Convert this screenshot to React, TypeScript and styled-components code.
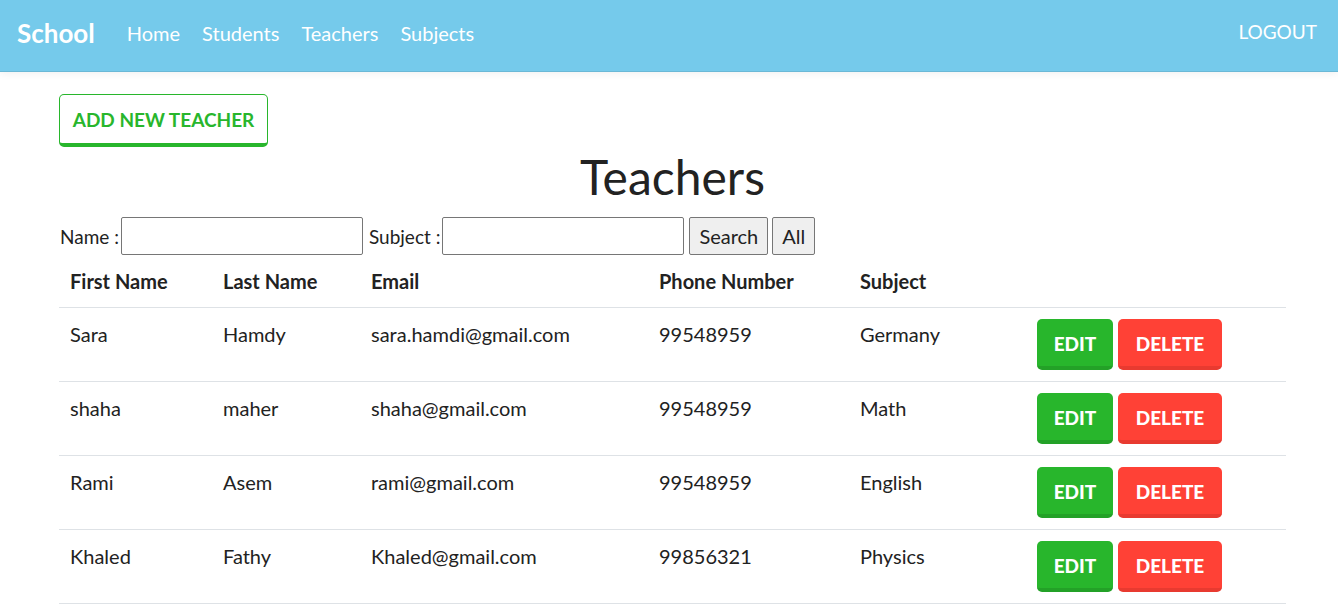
import React from "react";
import styled, { createGlobalStyle } from "styled-components";

const Global = createGlobalStyle`
  html, body { margin: 0; padding: 0; background: #fff; }
  body { font-family: Lato, "Noto Sans", sans-serif; color: #222; font-size: 20px; }
  * { box-sizing: border-box; }
`;

const Nav = styled.nav`
  height: 72px;
  background: #75caeb;
  border-bottom: 1px solid #6ab8d6;
  display: flex;
  align-items: center;
  padding: 0 21px 0 17px;
  box-shadow: 0 2px 8px rgba(0,0,0,0.06);
`;
const Brand = styled.a`
  font-weight: 700;
  font-size: 26px;
  color: #fff;
  margin-right: 32px;
  margin-top: -6px;
`;
const NavLinks = styled.div`
  display: flex;
  gap: 22px;
  flex: 1;
`;
const NavLink = styled.a`
  color: #fff;
  font-size: 20px;
  margin-top: -6px;
`;
const Logout = styled.a`
  color: #fff;
  font-size: 19px;
  margin-top: -9px;
`;

const Main = styled.main`
  padding: 22px 52px 0 59px;
`;

const AddButton = styled.button`
  font-family: inherit;
  height: 53px;
  width: 209px;
  background: #fff;
  border: 1px solid #28b62c;
  border-bottom: 4px solid #28b62c;
  border-radius: 5px;
  color: #28b62c;
  font-weight: 700;
  font-size: 19px;
  text-transform: uppercase;
  padding: 0;
  display: block;
`;

const Title = styled.h1`
  margin: 2px 0 12px;
  text-align: center;
  font-weight: 400;
  font-size: 48px;
  line-height: 56px;
  color: #222;
`;

const Filter = styled.form`
  display: flex;
  align-items: center;
  height: 38px;
  gap: 4px;
`;
const Label = styled.label`
  font-size: 19px;
  margin-left: 1px;
  display: flex;
  align-items: center;
  gap: 2px;
`;
const Input = styled.input`
  width: 242px;
  height: 38px;
  border: 1px solid #767676;
  border-radius: 2px;
  margin-right: 1px;
`;
const PlainButton = styled.button`
  font-family: inherit;
  font-size: 20px;
  height: 38px;
  padding: 0 9px;
  background: #efefef;
  border: 1px solid #767676;
  border-radius: 2px;
  color: #222;
`;

const Table = styled.table`
  width: 1227px;
  border-collapse: collapse;
  margin-top: 0;
`;
const Th = styled.th<{ $w?: number }>`
  text-align: left;
  font-weight: 700;
  font-size: 20px;
  padding: 11px 11px;
  line-height: 30px;
  border-bottom: 1px solid #dee2e6;
  width: ${(p) => (p.$w ? `${p.$w}px` : "auto")};
`;
const Td = styled.td`
  font-size: 20px;
  padding: 11px 11px 11px;
  line-height: 30px;
  vertical-align: top;
  border-bottom: 1px solid #dee2e6;
  height: 74px;
`;
const Actions = styled.div`
  display: flex;
  gap: 5px;
`;
const ActionButton = styled.button<{ $kind: "edit" | "delete" }>`
  font-family: inherit;
  height: 51px;
  width: ${(p) => (p.$kind === "edit" ? 76 : 104)}px;
  border: none;
  border-radius: 5px;
  border-bottom: 4px solid ${(p) => (p.$kind === "edit" ? "#23a127" : "#e83a30")};
  background: ${(p) => (p.$kind === "edit" ? "#28b62c" : "#ff4136")};
  color: #fff;
  font-weight: 900;
  font-size: 19px;
  text-transform: uppercase;
  padding: 2px 0 0;
`;

const teachers = [
  { f: "Sara", l: "Hamdy", e: "sara.hamdi@gmail.com", p: "99548959", s: "Germany" },
  { f: "shaha", l: "maher", e: "shaha@gmail.com", p: "99548959", s: "Math" },
  { f: "Rami", l: "Asem", e: "rami@gmail.com", p: "99548959", s: "English" },
  { f: "Khaled", l: "Fathy", e: "Khaled@gmail.com", p: "99856321", s: "Physics" },
];

export default function App() {
  return (
    <>
      <Global />
      <Nav>
        <Brand>School</Brand>
        <NavLinks>
          <NavLink>Home</NavLink>
          <NavLink>Students</NavLink>
          <NavLink>Teachers</NavLink>
          <NavLink>Subjects</NavLink>
        </NavLinks>
        <Logout>LOGOUT</Logout>
      </Nav>
      <Main>
        <AddButton>Add New Teacher</AddButton>
        <Title>Teachers</Title>
        <Filter onSubmit={(e) => e.preventDefault()}>
          <Label>
            Name :<Input />
          </Label>
          <Label>
            Subject :<Input />
          </Label>
          <PlainButton>Search</PlainButton>
          <PlainButton>All</PlainButton>
        </Filter>
        <Table>
          <thead>
            <tr>
              <Th $w={153}>First Name</Th>
              <Th $w={148}>Last Name</Th>
              <Th $w={288}>Email</Th>
              <Th $w={201}>Phone Number</Th>
              <Th $w={177}>Subject</Th>
              <Th></Th>
            </tr>
          </thead>
          <tbody>
            {teachers.map((t) => (
              <tr key={t.e}>
                <Td>{t.f}</Td>
                <Td>{t.l}</Td>
                <Td>{t.e}</Td>
                <Td>{t.p}</Td>
                <Td>{t.s}</Td>
                <Td>
                  <Actions>
                    <ActionButton $kind="edit">Edit</ActionButton>
                    <ActionButton $kind="delete">Delete</ActionButton>
                  </Actions>
                </Td>
              </tr>
            ))}
          </tbody>
        </Table>
      </Main>
    </>
  );
}
